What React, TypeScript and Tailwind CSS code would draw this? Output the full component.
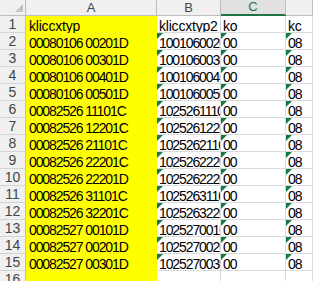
const colA = [
  "00080106 00201D",
  "00080106 00301D",
  "00080106 00401D",
  "00080106 00501D",
  "00082526 11101C",
  "00082526 12201C",
  "00082526 21101C",
  "00082526 22201C",
  "00082526 22201D",
  "00082526 31101C",
  "00082526 32201C",
  "00082527 00101D",
  "00082527 00201D",
  "00082527 00301D",
];

// B = "10" + chars 4-8 of A + suffix
const rows = colA.map((a) => ["10" + a.slice(4, 8) + a.slice(9), "00", "08"]);

const font = { fontFamily: '"Liberation Sans", Arial, sans-serif' };

const Tri = () => (
  <span className="absolute left-0 top-0 w-0 h-0 border-t-[6px] border-r-[6px] border-t-[#107c41] border-r-transparent" />
);

const Cell = ({ text, flag, last }: { text: string; flag?: boolean; last?: boolean }) => (
  <div
    className={`relative overflow-hidden whitespace-nowrap border-b border-[#dadada] ${last ? "" : "border-r"} pl-[2px] pt-[3px] text-[14px] leading-[14px] tracking-[-1.1px] text-black`}
  >
    {flag && <Tri />}
    {text}
  </div>
);

export default function App() {
  return (
    <div className="w-[313px] h-[281px] overflow-hidden bg-white" style={font}>
      <div className="grid grid-cols-[26px_131px_64px_65px_27px_1fr] grid-rows-[16px_repeat(16,17px)]">
        {/* header row */}
        <div className="relative bg-[#f0f0f0] border-r border-b border-[#bdbdbd]">
          <span className="absolute right-[2px] bottom-[3px] w-0 h-0 border-l-[8px] border-t-[8px] border-l-transparent border-t-transparent border-b-0 border-r-[0px]" />
          <svg className="absolute right-[2px] bottom-[3px]" width="8" height="8" viewBox="0 0 8 8">
            <path d="M8 0 L8 8 L0 8 Z" fill="#c4c4c4" />
          </svg>
        </div>
        <div className="bg-[#f0f0f0] border-r border-b border-[#bdbdbd] flex items-center justify-center text-[13px] text-[#444]">A</div>
        <div className="bg-[#f0f0f0] border-r border-b border-[#bdbdbd] flex items-center justify-center text-[13px] text-[#444]">B</div>
        <div className="bg-[#e1e1e1] border-r border-[#bdbdbd] border-b-2 border-b-[#217346] flex items-center justify-center text-[13px] text-[#217346]">C</div>
        <div className="bg-[#f0f0f0] border-r border-b border-[#bdbdbd]" />
        <div className="bg-[#f0f0f0] border-b border-[#bdbdbd]" />

        {/* row 1 */}
        <div className="bg-[#f0f0f0] border-r border-b border-[#d4d4d4] border-r-[#bdbdbd] flex items-center justify-center text-[14px] text-[#444]">1</div>
        <div className="bg-[#ffff00] pl-[3px] pt-[3px] text-[14px] leading-[14px] tracking-[-0.2px] text-black whitespace-nowrap">kliccxtyp</div>
        <div className="relative overflow-hidden whitespace-nowrap border-b border-r border-[#dadada] pl-[2px] pt-[3px] text-[14px] leading-[14px] tracking-[-0.2px] text-black">kliccxtyp2</div>
        <div className="relative overflow-hidden whitespace-nowrap border-b border-r border-[#dadada] pl-[2px] pt-[3px] text-[14px] leading-[14px] tracking-[-0.2px] text-black">ko</div>
        <div className="relative overflow-hidden whitespace-nowrap border-b border-r border-[#dadada] pl-[2px] pt-[3px] text-[14px] leading-[14px] tracking-[-0.2px] text-black">kc</div>
        <div className="border-b border-[#dadada]" />

        {colA.map((a, i) => (
          <Row key={i} n={i + 2} a={a} rest={rows[i]} />
        ))}

        {/* row 16 */}
        <div className="bg-[#f0f0f0] border-r border-[#bdbdbd] flex items-center justify-center text-[14px] text-[#444]">16</div>
        <div className="bg-[#ffff00]" />
        <div className="border-r border-[#dadada]" />
        <div className="border-r border-[#dadada]" />
        <div className="border-r border-[#dadada]" />
        <div />
      </div>
    </div>
  );
}

function Row({ n, a, rest }: { n: number; a: string; rest: string[] }) {
  return (
    <>
      <div className="bg-[#f0f0f0] border-r border-b border-[#d4d4d4] border-r-[#bdbdbd] flex items-center justify-center text-[14px] text-[#444]">
        {n}
      </div>
      <div className="bg-[#ffff00] pl-[3px] pt-[3px] text-[14px] leading-[14px] tracking-[-1.1px] text-black whitespace-nowrap">
        {a}
      </div>
      <Cell text={rest[0]} flag />
      <Cell text={rest[1]} flag />
      <Cell text={rest[2]} flag />
      <div className="border-b border-[#dadada]" />
    </>
  );
}
